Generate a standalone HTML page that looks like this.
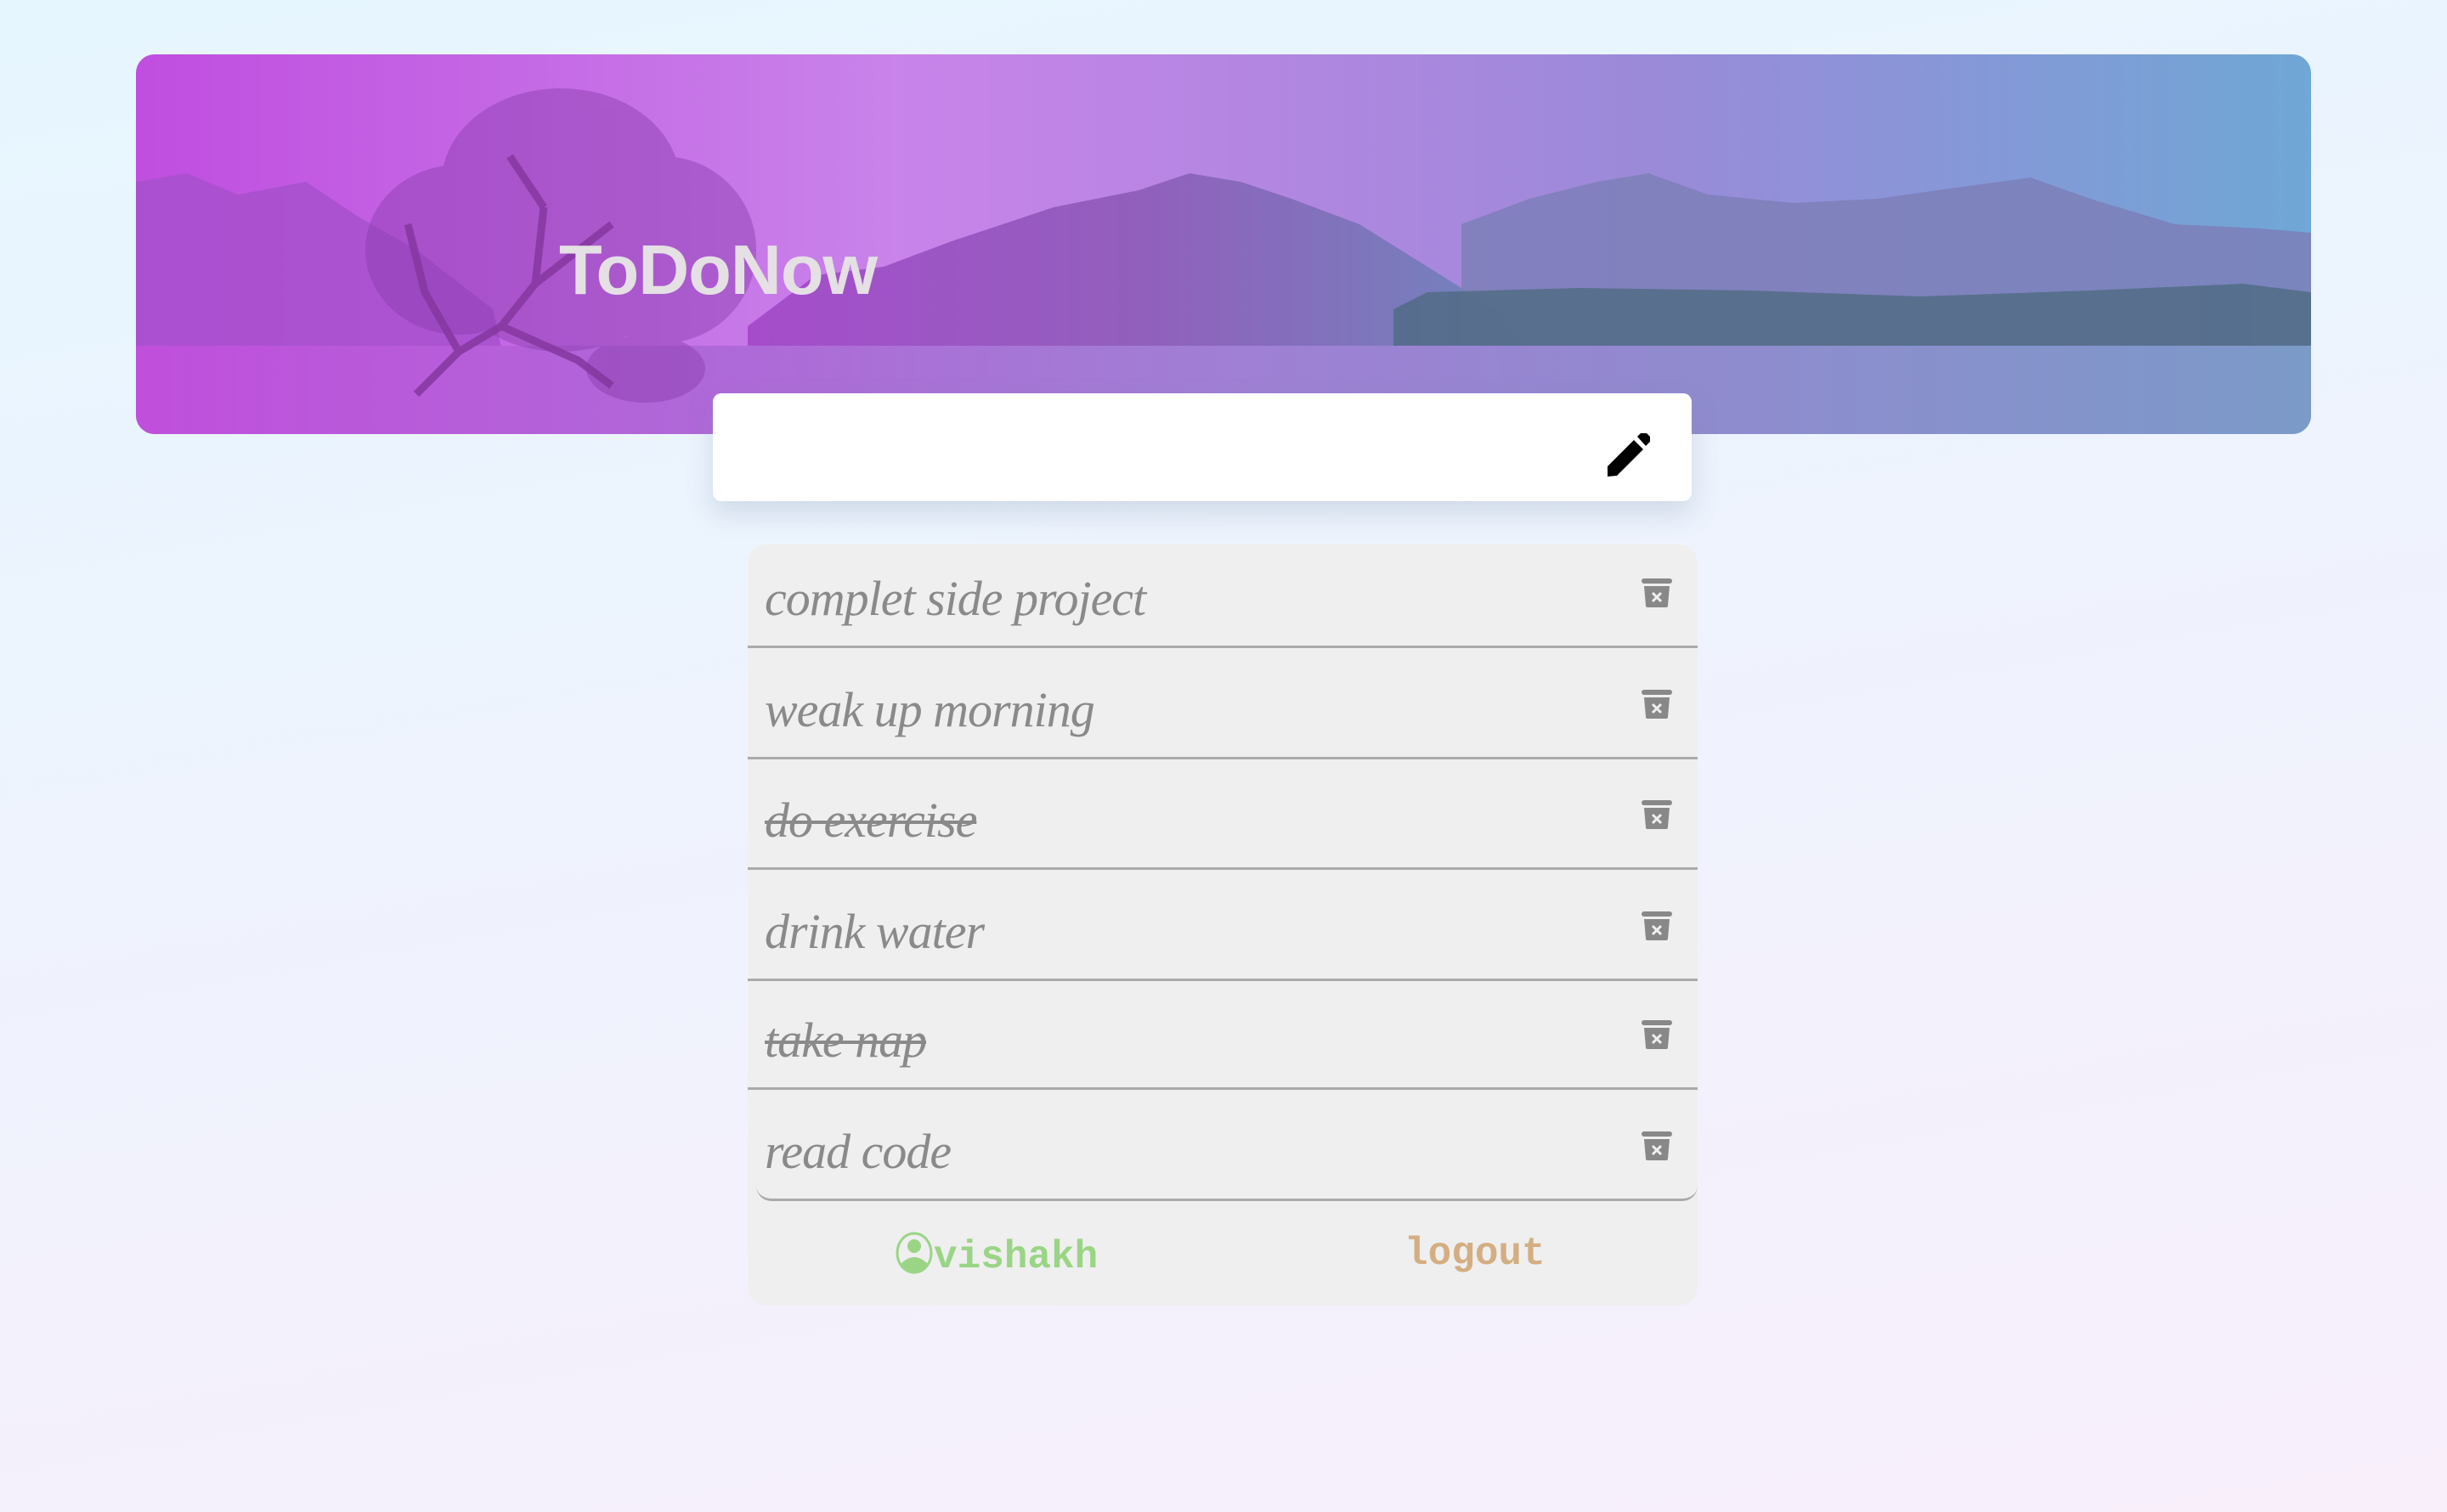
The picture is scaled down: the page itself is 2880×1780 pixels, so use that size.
<!DOCTYPE html>
<html><head><meta charset="utf-8">
<style>
html,body{margin:0;padding:0;}
body{width:2880px;height:1780px;overflow:hidden;position:relative;
background:linear-gradient(170deg,#e6f6fe 0%,#eef3fd 45%,#f4f0fc 80%,#f8effb 100%);
font-family:"Liberation Sans",sans-serif;}
.banner{position:absolute;left:160px;top:64px;width:2560px;height:447px;border-radius:22px;overflow:hidden;}
.title{position:absolute;font-size:83px;font-weight:bold;color:#e4e0e4;letter-spacing:-1px;}
.input{position:absolute;left:839px;top:463px;width:1152px;height:127px;background:#fff;border-radius:10px;
box-shadow:0 14px 30px rgba(120,140,170,0.25);}
.list{position:absolute;left:880px;top:641px;width:1118px;height:896px;background:#efefef;border-radius:22px;}
.row{position:absolute;left:0;width:1118px;border-bottom:3px solid #aaa;}
.row span{position:absolute;left:20px;bottom:26px;line-height:58px;font-family:"Liberation Serif",serif;font-style:italic;font-size:58px;color:#8a8a8a;letter-spacing:-1px;}
.row.done span{text-decoration:line-through;text-decoration-thickness:4px;}
.trash{position:absolute;left:1052px;bottom:45px;}
.foot{position:absolute;top:1450px;font-family:"Liberation Mono",monospace;font-weight:bold;font-size:46px;}
</style></head><body>
<div class="banner">
<svg width="2560" height="447" viewBox="0 0 2560 447">
<defs>
<linearGradient id="sky" x1="0" y1="0" x2="1" y2="0">
<stop offset="0" stop-color="#c04ee0"/><stop offset="0.35" stop-color="#c983ea"/>
<stop offset="0.7" stop-color="#9a8ad8"/><stop offset="1" stop-color="#6fa7d6"/></linearGradient>
<linearGradient id="water" x1="0" y1="0" x2="1" y2="0">
<stop offset="0" stop-color="#c04fdc"/><stop offset="0.5" stop-color="#a07fd4"/><stop offset="1" stop-color="#7b9ac8"/></linearGradient>
<linearGradient id="mt" x1="0" y1="0" x2="1" y2="0">
<stop offset="0" stop-color="#a247c8"/><stop offset="0.5" stop-color="#8d5bb8"/><stop offset="1" stop-color="#6a86b8"/></linearGradient>
</defs>
<rect width="2560" height="447" fill="url(#sky)"/>
<path d="M0 150 L60 140 L120 165 L200 150 L260 190 L330 230 L420 300 L430 345 L0 345Z" fill="#a550cc" opacity="0.8"/>
<path d="M720 320 L800 260 L880 250 L960 220 L1080 180 L1180 160 L1240 140 L1300 150 L1360 170 L1440 200 L1520 250 L1600 300 L1640 345 L720 345Z" fill="url(#mt)" opacity="0.9"/>
<path d="M1560 200 L1640 170 L1720 150 L1780 140 L1850 165 L1950 175 L2050 170 L2120 160 L2230 145 L2300 170 L2400 200 L2500 205 L2560 210 L2560 345 L1560 345Z" fill="#7d7fb8" opacity="0.85"/>
<path d="M1480 300 L1520 280 L1700 275 L1900 278 L2100 285 L2300 278 L2480 270 L2560 280 L2560 345 L1480 345Z" fill="#4f6a82" opacity="0.8"/>
<rect y="343" width="2560" height="104" fill="url(#water)"/>
<g fill="#8a3cae" opacity="0.45">
<ellipse cx="500" cy="150" rx="140" ry="110"/>
<ellipse cx="380" cy="230" rx="110" ry="100"/>
<ellipse cx="620" cy="230" rx="110" ry="110"/>
<ellipse cx="500" cy="270" rx="120" ry="80"/>
<ellipse cx="600" cy="370" rx="70" ry="40"/>
</g>
<g stroke="#85379f" fill="none" stroke-width="9" opacity="0.85">
<path d="M330 400 L380 350 L430 320 L470 270 L480 180"/>
<path d="M380 350 L340 280 L320 200"/><path d="M430 320 L520 360 L560 390"/>
<path d="M470 270 L560 200"/><path d="M480 180 L440 120"/>
</g>
</svg>
<div class="title" style="left:498px;top:206px;">ToDoNow</div>
</div>
<div class="input">
<svg style="position:absolute;left:1051px;top:47px" width="52" height="52" viewBox="0 0 52 52">
<path d="M2 39 L33 8 L44 19 L13 50 L2 51 Z" fill="#000"/>
<path d="M37 4 L42 -1 Q45 -3 48 0 L52 4 Q54 7 52 10 L47 15 Z" fill="#000"/>
</svg>
</div>
<div class="list">
<div class="row" style="top:0;height:119px"><span>complet side project</span><svg class="trash" width="36" height="34" viewBox="0 0 36 34"><rect x="0" y="0" width="36" height="6" rx="3" fill="#888"/><path d="M3 9 H33 L31 32 Q31 34 29 34 H7 Q5 34 5 32Z" fill="#888"/><path d="M13 17 L23 27 M23 17 L13 27" stroke="#efefef" stroke-width="3"/></svg></div>
<div class="row" style="top:122px;height:128px"><span>weak up morning</span><svg class="trash" width="36" height="34" viewBox="0 0 36 34"><rect x="0" y="0" width="36" height="6" rx="3" fill="#888"/><path d="M3 9 H33 L31 32 Q31 34 29 34 H7 Q5 34 5 32Z" fill="#888"/><path d="M13 17 L23 27 M23 17 L13 27" stroke="#efefef" stroke-width="3"/></svg></div>
<div class="row done" style="top:253px;height:127px"><span>do exercise</span><svg class="trash" width="36" height="34" viewBox="0 0 36 34"><rect x="0" y="0" width="36" height="6" rx="3" fill="#888"/><path d="M3 9 H33 L31 32 Q31 34 29 34 H7 Q5 34 5 32Z" fill="#888"/><path d="M13 17 L23 27 M23 17 L13 27" stroke="#efefef" stroke-width="3"/></svg></div>
<div class="row" style="top:383px;height:128px"><span>drink water</span><svg class="trash" width="36" height="34" viewBox="0 0 36 34"><rect x="0" y="0" width="36" height="6" rx="3" fill="#888"/><path d="M3 9 H33 L31 32 Q31 34 29 34 H7 Q5 34 5 32Z" fill="#888"/><path d="M13 17 L23 27 M23 17 L13 27" stroke="#efefef" stroke-width="3"/></svg></div>
<div class="row done" style="top:514px;height:125px"><span>take nap</span><svg class="trash" width="36" height="34" viewBox="0 0 36 34"><rect x="0" y="0" width="36" height="6" rx="3" fill="#888"/><path d="M3 9 H33 L31 32 Q31 34 29 34 H7 Q5 34 5 32Z" fill="#888"/><path d="M13 17 L23 27 M23 17 L13 27" stroke="#efefef" stroke-width="3"/></svg></div>
<div class="row" style="top:642px;height:128px;border-radius:0 0 18px 18px;left:10px;width:1108px"><span style="left:10px">read code</span><svg class="trash" style="left:1042px" width="36" height="34" viewBox="0 0 36 34"><rect x="0" y="0" width="36" height="6" rx="3" fill="#888"/><path d="M3 9 H33 L31 32 Q31 34 29 34 H7 Q5 34 5 32Z" fill="#888"/><path d="M13 17 L23 27 M23 17 L13 27" stroke="#efefef" stroke-width="3"/></svg></div>
</div>
<div class="foot" style="left:1053px;color:#9ad586;">
<svg width="46" height="50" viewBox="0 0 46 50" style="vertical-align:-8px"><ellipse cx="23" cy="25" rx="20" ry="23" fill="none" stroke="#9ad586" stroke-width="3"/><circle cx="23" cy="17" r="8" fill="#9ad586"/><path d="M7 38 Q23 22 39 38 Q31 48 23 48 Q15 48 7 38Z" fill="#9ad586"/></svg>vishakh</div>
<div class="foot" style="left:1653px;color:#d4ae82;">logout</div>
</body></html>
